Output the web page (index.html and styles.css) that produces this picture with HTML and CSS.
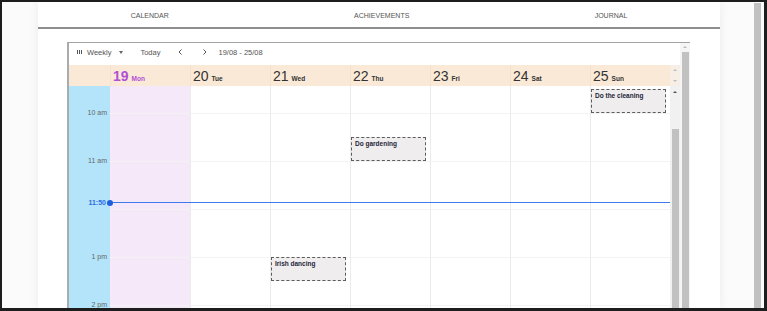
FILE: index.html
```html
<!DOCTYPE html>
<html lang="en">
  <head>
    <meta charset="UTF-8" />
    <meta name="viewport" content="width=device-width, initial-scale=1.0" />
    <title>Calendar</title>

    <link rel="stylesheet" href="styles.css">
  </head>
  <body>
    <div class="frame">
      <div class="page">
        <div class="panel">
          <div class="nav">
            <span class="nav-item">CALENDAR</span>
            <span class="nav-item">ACHIEVEMENTS</span>
            <span class="nav-item">JOURNAL</span>
          </div>

          <div class="content">
            <div class="cal">
              <div class="cal-main">
                <div class="toolbar">
                  <svg class="view-icon" width="5" height="4" viewBox="0 0 5 4">
                    <rect x="0" y="0" width="1" height="4" fill="#555" />
                    <rect x="2" y="0" width="1" height="4" fill="#555" />
                    <rect x="4" y="0" width="1" height="4" fill="#555" />
                  </svg>
                  <span class="view-name">Weekly</span>
                  <span class="caret"></span>
                  <span class="today">Today</span>
                  <svg class="chev prev" width="4" height="6" viewBox="0 0 4 6">
                    <path d="M3.5 0.5 L1 3 L3.5 5.5" fill="none" stroke="#555" stroke-width="1" />
                  </svg>
                  <svg class="chev next" width="4" height="6" viewBox="0 0 4 6">
                    <path d="M0.5 0.5 L3 3 L0.5 5.5" fill="none" stroke="#555" stroke-width="1" />
                  </svg>
                  <span class="range">19/08 - 25/08</span>
                </div>

                <div class="cal-head">
                  <div class="head-gutter"></div>
                  <div class="head-day today-head"><span class="num">19</span><span class="dname">Mon</span></div>
                  <div class="head-day"><span class="num">20</span><span class="dname">Tue</span></div>
                  <div class="head-day"><span class="num">21</span><span class="dname">Wed</span></div>
                  <div class="head-day"><span class="num">22</span><span class="dname">Thu</span></div>
                  <div class="head-day"><span class="num">23</span><span class="dname">Fri</span></div>
                  <div class="head-day"><span class="num">24</span><span class="dname">Sat</span></div>
                  <div class="head-day"><span class="num">25</span><span class="dname">Sun</span></div>
                  <div class="head-scroll">
                    <span class="arrow up light"></span>
                    <span class="arrow down light"></span>
                  </div>
                </div>

                <div class="cal-body">
                  <div class="times">
                    <div class="time">10 am</div>
                    <div class="time">11 am</div>
                    <div class="time"></div>
                    <div class="time">1 pm</div>
                    <div class="time">2 pm</div>
                  </div>
                  <div class="day today-col"></div>
                  <div class="day"></div>
                  <div class="day">
                    <div class="event" style="top: 171px; height: 24px">Irish dancing</div>
                  </div>
                  <div class="day">
                    <div class="event" style="top: 51px; height: 24px">Do gardening</div>
                  </div>
                  <div class="day"></div>
                  <div class="day"></div>
                  <div class="day">
                    <div class="event" style="top: 3px; height: 24px">Do the cleaning</div>
                  </div>
                  <div class="body-scroll">
                    <span class="arrow up"></span>
                    <div class="thumb"></div>
                  </div>

                  <div class="now" style="top: 116px">
                    <span class="now-label">11:50</span>
                    <span class="now-dot"></span>
                  </div>
                </div>
              </div>

              <div class="cal-scroll">
                <span class="arrow up light"></span>
                <div class="thumb"></div>
              </div>
            </div>
          </div>
        </div>
      </div>

      <div class="page-scroll">
        <div class="thumb"></div>
      </div>
    </div>
  </body>
</html>
```

FILE: styles.css
```css
* {
  box-sizing: border-box;
}

body {
  margin: 0;
  font-family: "Liberation Sans", Arial, sans-serif;
  background-color: white;
}

.frame {
  width: 767px;
  height: 311px;
  border: solid #1d1d1d;
  border-width: 2px 3px 3px 2px;
  background-color: #fbfbfb;
  display: flex;
  overflow: hidden;
}

.page {
  flex: 1;
  padding: 0 34px 0 36px;
  height: 100%;
}

.panel {
  height: 100%;
  background-color: white;
  box-shadow: 0 0 10px rgba(0, 0, 0, 0.07);
  display: flex;
  flex-direction: column;
}

.nav {
  height: 27px;
  border-bottom: 2px solid #8d8d8d;
  display: flex;
  justify-content: space-around;
  align-items: center;
  padding-top: 1px;
  font-size: 7px;
  color: #555;
}

.content {
  flex: 1;
  min-height: 0;
  padding: 13px 30px 0 29px;
}

/* calendar box */
.cal {
  height: 100%;
  display: flex;
  border-top: 1px solid #a3a3a3;
}

.cal-main {
  flex: 1;
  display: flex;
  flex-direction: column;
  border-left: 2px solid #a9acae;
}

.toolbar {
  height: 22px;
  display: flex;
  align-items: center;
  padding: 0 0 4px 8px;
  font-size: 7.5px;
  color: #555;
}

.view-icon {
  margin-right: 5px;
}

.caret {
  margin-left: 8px;
  width: 0;
  height: 0;
  border-left: 2px solid transparent;
  border-right: 2px solid transparent;
  border-top: 3px solid #666;
}

.today {
  margin-left: 17px;
}

.chev.prev {
  margin-left: 18px;
}

.chev.next {
  margin-left: 21px;
}

.range {
  margin-left: 11px;
}

.cal-head {
  height: 21px;
  display: flex;
  background-color: #fae9d6;
}

.head-gutter {
  width: 41px;
}

.head-day {
  width: 80px;
  border-left: 1px solid #f3e2cf;
  padding: 4px 0 0 2px;
  display: flex;
  align-items: baseline;
  color: #333;
}

.head-day .num {
  font-size: 14px;
  line-height: 15px;
}

.head-day .dname {
  font-size: 6.5px;
  font-weight: bold;
  margin-left: 3px;
}

.today-head {
  color: #b24fd6;
}

.today-head .num {
  font-weight: bold;
}

.head-scroll {
  width: 10px;
  background-color: #f7efe6;
  display: flex;
  flex-direction: column;
  align-items: center;
  justify-content: space-between;
  padding: 4px 0 4px;
}

.arrow {
  width: 0;
  height: 0;
  border-left: 2px solid transparent;
  border-right: 2px solid transparent;
}

.arrow.up {
  border-bottom: 2px solid #555;
}

.arrow.down {
  border-top: 2px solid #555;
}

.arrow.up.light {
  border-bottom-color: #bbb;
}

.arrow.down.light {
  border-top-color: #bbb;
}

/* body of the week */
.cal-body {
  flex: 1;
  min-height: 0;
  display: flex;
  position: relative;
  overflow: hidden;
  background-color: white;
}

.times {
  width: 41px;
  padding-top: 22px;
  background-color: #b3e4fa;
}

.time {
  height: 48px;
  line-height: 10px;
  text-align: right;
  padding-right: 3px;
  font-size: 7px;
  color: #666;
}

.day {
  width: 80px;
  position: relative;
  border-left: 1px solid #ebebeb;
  background-image: linear-gradient(to bottom, transparent 47px, #f3f3f3 47px);
  background-size: 100% 48px;
  background-position: 0 28px;
}

.today-col {
  background-color: #f4e8f9;
  border-left: none;
}

.event {
  position: absolute;
  left: 0;
  width: 75px;
  border: 1px dashed #5c5c5c;
  background-color: #efedee;
  padding: 2px 3px;
  font-size: 6.5px;
  line-height: 8px;
  font-weight: bold;
  color: #1f2538;
}

.body-scroll {
  width: 10px;
  background-color: #f1f1f1;
  display: flex;
  flex-direction: column;
  align-items: center;
  padding-top: 5px;
}

.body-scroll .thumb {
  margin-top: 36px;
  width: 7px;
  flex: 1;
  background-color: #c1c1c1;
}

.now {
  position: absolute;
  left: 0;
  right: 10px;
  height: 0;
}

.now::before {
  content: "";
  position: absolute;
  left: 41px;
  right: 0;
  top: 0;
  border-top: 1px solid #3d7bec;
}

.now-label {
  position: absolute;
  right: calc(100% - 37px);
  top: -4px;
  font-size: 7px;
  line-height: 9px;
  font-weight: bold;
  color: #2f6be4;
}

.now-dot {
  position: absolute;
  left: 38px;
  top: -2.5px;
  width: 6px;
  height: 6px;
  border-radius: 50%;
  background-color: #1f5fdc;
}

.cal-scroll {
  width: 10px;
  background-color: #f5f5f5;
  display: flex;
  flex-direction: column;
  align-items: center;
  padding-top: 3px;
}

.cal-scroll .thumb {
  margin-top: 4px;
  width: 7px;
  flex: 1;
  background-color: #c1c1c1;
}

/* window scrollbar */
.page-scroll {
  width: 10px;
  padding: 1px 3px 0 0;
}

.page-scroll .thumb {
  height: 100%;
  background-color: #c1c1c1;
}
```
